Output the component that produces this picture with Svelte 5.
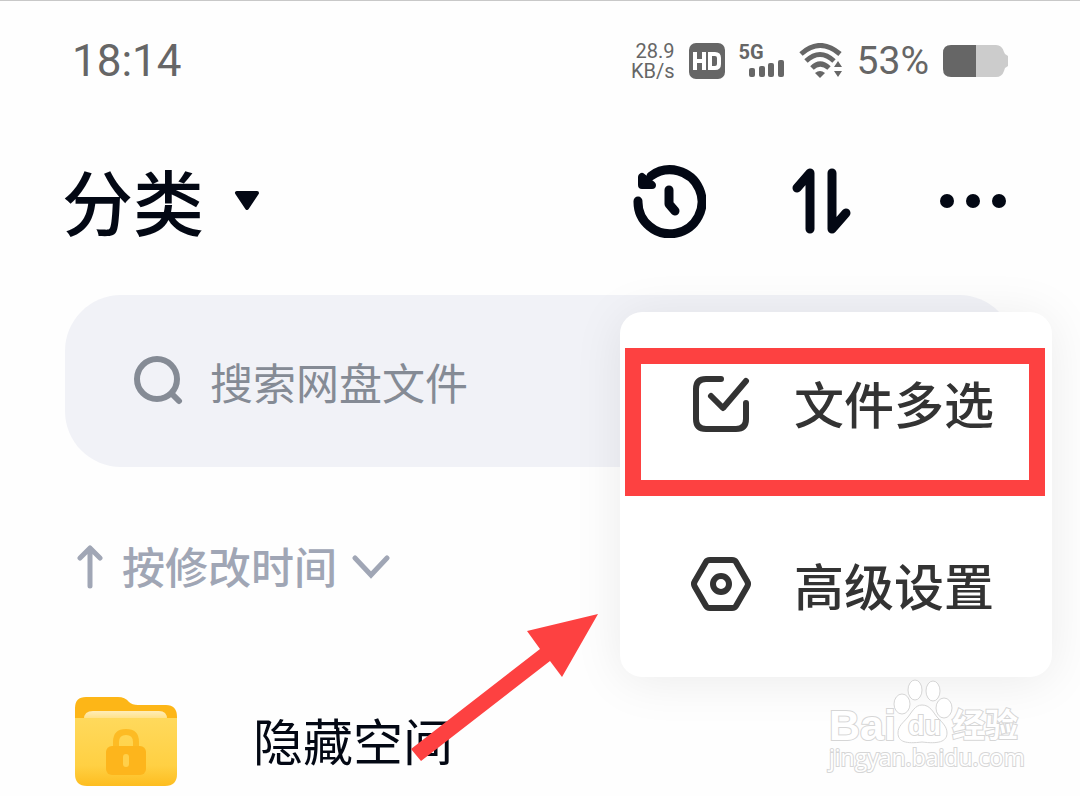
<script>
	let keyword = $state('');
	let menuOpen = $state(true);

	const menuItems = [
		{ id: 'select', label: '文件多选' },
		{ id: 'settings', label: '高级设置' }
	];

	const files = [{ name: '隐藏空间' }];

	function toggleMenu() {
		menuOpen = !menuOpen;
	}
</script>

<div class="screen">
	<!-- Status bar -->
	<div class="status">
		<span class="time">18:14</span>
		<div class="status-icons">
			<div class="speed">
				<span>28.9</span>
				<span>KB/s</span>
			</div>
			<svg width="36" height="36" viewBox="0 0 36 36">
				<rect width="36" height="36" rx="7" fill="#666" />
				<g fill="none" stroke="#fff" stroke-width="4">
					<path d="M6 9v18M15 9v18M6 18h9M21 11h5q4 0 4 4v6q0 4-4 4h-5z" />
				</g>
			</svg>
			<div class="signal">
				<span>5G</span>
				<svg width="36" height="18" viewBox="0 0 36 18" fill="#666">
					<rect x="0" y="8" width="6" height="9" rx="2" />
					<rect x="10" y="6" width="6" height="11" rx="2" />
					<rect x="19" y="3" width="6" height="14" rx="2" />
					<rect x="29" y="0" width="6" height="17" rx="2" />
				</svg>
			</div>
			<svg width="44" height="36" viewBox="0 0 44 36">
				<g fill="none" stroke="#666" stroke-width="5">
					<path d="M2 11Q21-6 41 11" />
					<path d="M7 18Q21 5 35 18" />
					<path d="M13 25Q21 17 30 25" />
				</g>
				<path d="M16 30q5-4 10 0l-5 5z" fill="#666" />
				<path d="M39 18l4 6h-8zM39 34l4-6h-8z" fill="#666" />
			</svg>
			<span class="percent">53%</span>
			<svg width="65" height="32" viewBox="0 0 65 32">
				<path d="M32 0h21q6 0 8 7l1 2 3 2v10l-3 2-1 3q-2 6-8 6h-21z" fill="#ccc" />
				<path d="M33 0H8Q0 0 0 8v16q0 8 8 8h25z" fill="#666" />
			</svg>
		</div>
	</div>

	<header class="header">
		<button class="title">
			<span class="label">分类</span>
			<svg width="26" height="20" viewBox="0 0 26 20">
				<path d="M3 2h20L13 17z" fill="#030814" stroke="#030814" stroke-width="4" stroke-linejoin="round" />
			</svg>
		</button>
		<div class="actions">
			<button aria-label="历史">
				<svg width="74" height="74" viewBox="0 0 74 74" fill="none" stroke="#030814" stroke-width="9" stroke-linecap="round" stroke-linejoin="round">
					<path d="M6 37A32 32 0 1 0 19 12" />
					<path d="M10 13v8h10z" fill="#030814" stroke-width="8" />
					<path d="M37 26v14l6 7" />
				</svg>
			</button>
			<button aria-label="排序">
				<svg width="62" height="68" viewBox="0 0 62 68" fill="none" stroke="#030814" stroke-width="9" stroke-linecap="round" stroke-linejoin="round">
					<path d="M5 21L18 6v56M40 6v56l14-16" />
				</svg>
			</button>
			<button aria-label="更多" onclick={toggleMenu}>
				<svg width="66" height="16" viewBox="0 0 66 16" fill="#030814">
					<circle cx="7" cy="8" r="7" />
					<circle cx="33" cy="8" r="7" />
					<circle cx="59" cy="8" r="7" />
				</svg>
			</button>
		</div>
	</header>

	<label class="search">
		<svg width="50" height="50" viewBox="0 0 50 50" fill="none" stroke="#858b95" stroke-width="6" stroke-linecap="round">
			<circle cx="24" cy="23" r="20" />
			<path d="M39 38l7 7" />
		</svg>
		<input type="text" placeholder="搜索网盘文件" bind:value={keyword} />
	</label>

	<button class="sort">
		<svg width="30" height="44" viewBox="0 0 30 44" fill="none" stroke="#a0a6b5" stroke-width="5" stroke-linecap="round" stroke-linejoin="round">
			<path d="M13 41V3M3 13L13 3l10 10" />
		</svg>
		<span class="label">按修改时间</span>
		<svg width="38" height="24" viewBox="0 0 38 24" fill="none" stroke="#a0a6b5" stroke-width="5" stroke-linecap="round">
			<path d="M3 3l16 17L35 3" />
		</svg>
	</button>

	<div class="files">
		{#each files as file}
			<a class="file" href="#hidden">
				<svg width="104" height="92" viewBox="0 0 104 92">
					<defs>
						<linearGradient id="front" x1="0" y1="0" x2="0" y2="1">
							<stop offset="0" stop-color="#ffd95c" />
							<stop offset="0.7" stop-color="#ffd043" />
							<stop offset="1" stop-color="#fdbd20" />
						</linearGradient>
						<linearGradient id="paper" x1="0" y1="0" x2="0" y2="1">
							<stop offset="0" stop-color="#ffedb8" />
							<stop offset="1" stop-color="#ffd65d" />
						</linearGradient>
					</defs>
					<path d="M1 30V13Q1 2 12 2h32q7 0 11 5 3 3 9 3h28q11 0 11 12v12H1z" fill="#fdb617" />
					<path d="M10 24q0-8 9-8h66q8 0 8 8v6H10z" fill="url(#paper)" />
					<path d="M1 23h102v56q0 12-12 12H13Q1 91 1 79z" fill="url(#front)" />
					<path d="M42 54V47q0-10 10-10t10 10v7" fill="none" stroke="#fdbb24" stroke-width="6" />
					<rect x="32" y="51" width="40" height="29" rx="6" fill="#fdb51c" />
					<rect x="49" y="59" width="6" height="13" rx="3" fill="#ffd04a" />
				</svg>
				<span class="label">{file.name}</span>
			</a>
		{/each}
	</div>

	{#if menuOpen}
		<div class="menu">
			{#each menuItems as item}
				<button class="menu-item">
					{#if item.id === 'select'}
						<svg width="62" height="62" viewBox="0 0 62 62" fill="none" stroke="#333" stroke-width="6" stroke-linecap="round" stroke-linejoin="round">
							<path d="M31 6H16Q6 6 6 16v30q0 10 10 10h30q10 0 10-10V30" />
							<path d="M21 23l12 12L56 8" />
						</svg>
					{:else}
						<svg width="62" height="62" viewBox="0 0 62 62" fill="none" stroke="#333" stroke-width="6" stroke-linejoin="round">
							<path d="M20 5h22q3 0 4 2l11 19q2 3 0 6L46 51q-1 2-4 2H20q-3 0-4-2L5 32q-2-3 0-6L16 7q1-2 4-2z" />
							<circle cx="31" cy="29" r="8" />
						</svg>
					{/if}
					<span class="label">{item.label}</span>
				</button>
			{/each}
			<div class="highlight"></div>
		</div>
	{/if}

	<svg class="pointer" width="188" height="152" viewBox="0 0 188 152">
		<path d="M187 1L151 64 139 48 10 148 0 136 129 36 116 18z" fill="#fd4141" />
	</svg>

	<svg class="watermark" width="204" height="104" viewBox="0 0 204 104">
		<g fill="#fff" stroke="#d6d6d6">
			<text class="wm-name" x="4" y="65">Bai</text>
			<ellipse cx="77" cy="29" rx="8" ry="10" />
			<ellipse cx="90" cy="15" rx="7" ry="10" />
			<ellipse cx="108" cy="16" rx="7" ry="10" />
			<ellipse cx="119" cy="33" rx="8" ry="10" />
			<path d="M97 30c8 0 11 7 15 12 6 6 10 10 10 16 0 9-9 11-25 9-16 2-24 0-24-9 0-7 5-10 10-16 4-5 7-12 14-12z" />
			<text class="wm-du" x="83" y="60">du</text>
			<text class="wm-cjk" x="127" y="62">经验</text>
			<text class="wm-url" x="4" y="91">jingyan.baidu.com</text>
		</g>
	</svg>
</div>

<style>
	:global(body) {
		background: #fefefe;
	}

	.screen {
		position: relative;
		display: flex;
		flex-direction: column;
		border-top: 1px solid #c8c8c8;
		font-family: 'Noto Sans CJK SC', sans-serif;
		color: #030814;
		overflow: hidden;
	}

	button {
		border: none;
		background: none;
		padding: 0;
		font: inherit;
		color: inherit;
		cursor: pointer;
	}

	svg {
		display: block;
		flex: none;
	}

	.label {
		padding-bottom: 4px;
	}

	.status {
		display: flex;
		align-items: center;
		justify-content: space-between;
		height: 120px;
		padding: 0 72px;
		font-family: Roboto, sans-serif;
		color: #666;
	}

	.time {
		font-size: 44px;
	}

	.status-icons {
		display: flex;
		align-items: center;
		gap: 14px;
	}

	.speed {
		display: flex;
		flex-direction: column;
		font-size: 20px;
		line-height: 20px;
		text-align: right;
	}

	.signal {
		display: flex;
		flex-direction: column;
		font-size: 20px;
		font-weight: 700;
		line-height: 16px;
	}

	.signal svg {
		align-self: flex-end;
		margin-left: 10px;
	}

	.percent {
		font-size: 39px;
	}

	.header {
		display: flex;
		align-items: center;
		justify-content: space-between;
		height: 160px;
		padding: 0 74px 0 62px;
	}

	.title {
		display: flex;
		align-items: center;
		gap: 30px;
		font-size: 71px;
		font-weight: 500;
		line-height: 80px;
	}

	.actions {
		display: flex;
		align-items: center;
		gap: 86px;
	}

	.search {
		display: flex;
		align-items: center;
		gap: 27px;
		height: 172px;
		margin: 14px 65px 50px;
		padding: 0 68px;
		box-sizing: border-box;
		border-radius: 56px;
		background: #f1f2f7;
	}

	.search input {
		flex: 1;
		min-width: 0;
		border: none;
		outline: none;
		padding: 0;
		background: none;
		font: inherit;
		font-size: 43px;
	}

	.search input::placeholder {
		color: #858b95;
		opacity: 1;
	}

	.sort {
		display: flex;
		align-items: center;
		align-self: flex-start;
		gap: 15px;
		height: 100px;
		margin-left: 77px;
		font-size: 43px;
		font-weight: 500;
		color: #a0a6b5;
	}

	.files {
		padding: 74px 74px 0;
	}

	.file {
		display: flex;
		align-items: center;
		gap: 75px;
		height: 100px;
		font-size: 50px;
		color: inherit;
		text-decoration: none;
	}

	.menu {
		position: absolute;
		top: 311px;
		right: 28px;
		display: flex;
		flex-direction: column;
		gap: 72px;
		width: 432px;
		padding: 37px 70px 36px;
		box-sizing: border-box;
		border-radius: 22px;
		background: #fff;
		box-shadow: 0 4px 50px rgba(0, 0, 0, 0.08);
	}

	.menu-item {
		display: flex;
		align-items: center;
		gap: 42px;
		height: 110px;
		font-size: 50px;
		font-weight: 500;
		color: #333;
		white-space: nowrap;
	}

	.highlight {
		position: absolute;
		top: 36px;
		left: 5px;
		right: 7px;
		height: 148px;
		box-sizing: border-box;
		border: 16px solid #fd4141;
		pointer-events: none;
	}

	.pointer {
		position: absolute;
		top: 612px;
		left: 411px;
		pointer-events: none;
	}

	.watermark {
		position: absolute;
		top: 674px;
		right: 51px;
		pointer-events: none;
	}

	.watermark text {
		paint-order: stroke;
		stroke-width: 2px;
	}

	.wm-name {
		font: 700 43px 'Liberation Sans', sans-serif;
	}

	.wm-du {
		font: 700 27px 'Liberation Sans', sans-serif;
	}

	.wm-cjk {
		font: 700 33px 'Noto Sans CJK SC', sans-serif;
	}

	.wm-url {
		font: 400 23px 'Open Sans', sans-serif;
	}
</style>
